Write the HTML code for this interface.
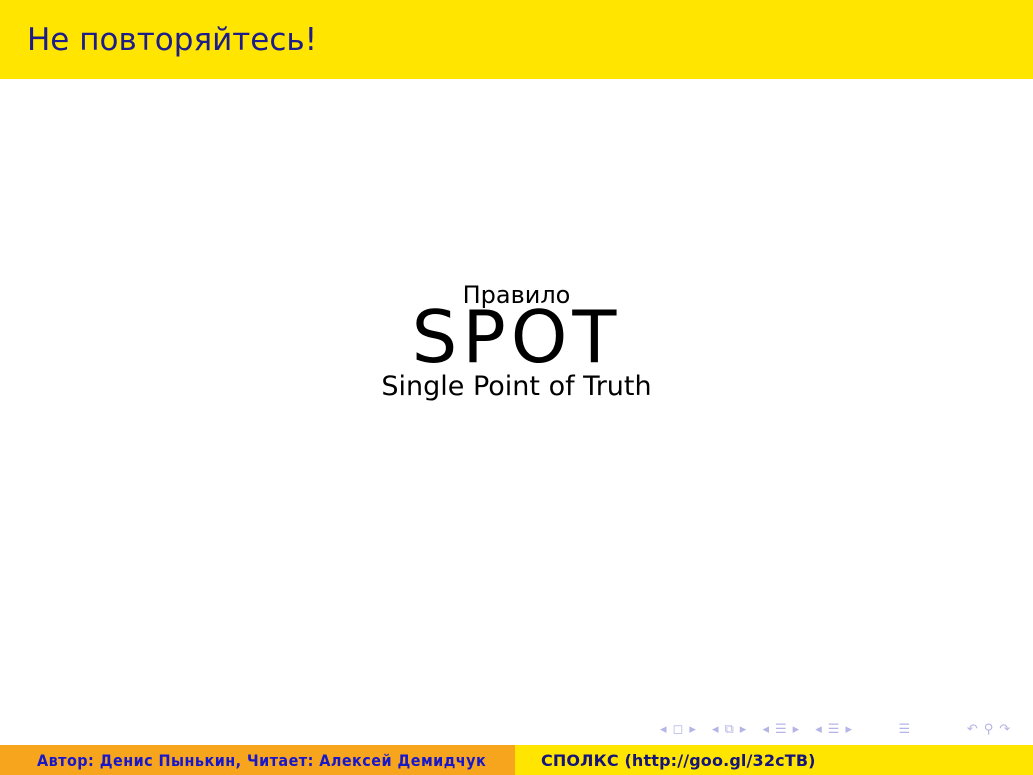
<!DOCTYPE html>
<html><head><meta charset="utf-8"><style>
body{margin:0;width:1033px;height:775px;position:relative;background:#fff;font-family:"DejaVu Sans","Liberation Sans",sans-serif;overflow:hidden}
.hdr{position:absolute;left:0;top:0;width:1033px;height:79px;background:#FFE500}
.t{position:absolute;left:27px;top:22px;font-size:31px;color:#1c1c8a;white-space:nowrap;letter-spacing:0px}
.c{position:absolute;left:0;width:1033px;text-align:center;color:#000;white-space:nowrap}
.f1{position:absolute;left:0;top:745px;width:515px;height:30px;background:#F8A51E}
.f2{position:absolute;left:515px;top:745px;width:518px;height:30px;background:#FFE500}
.ft{position:absolute;top:751px;font-size:16px;font-weight:bold;white-space:nowrap;font-family:"DejaVu Sans Condensed","DejaVu Sans",sans-serif}
.nav{position:absolute;top:722px;font-size:13px;color:#b4b4e6;white-space:nowrap;letter-spacing:6px}
</style></head><body>
<div class="hdr"><div class="t">Не повторяйтесь!</div></div>
<div class="c" style="top:281px;font-size:24px;">Правило</div>
<div class="c" style="top:297px;font-size:72px;letter-spacing:5px;line-height:80px">SPOT</div>
<div class="c" style="top:371px;font-size:27px;">Single Point of Truth</div>
<div class="nav" style="left:660px">◂◻▸ ◂⧉▸ ◂☰▸ ◂☰▸ &nbsp;&nbsp; ☰ &nbsp;&nbsp;&nbsp; ↶⚲↷</div>
<div class="f1"></div><div class="f2"></div>
<div class="ft" style="left:37px;color:#1818c8;letter-spacing:0.45px">Автор: Денис Пынькин, Читает: Алексей Демидчук</div>
<div class="ft" style="left:541px;color:#14147a;font-family:'DejaVu Sans',sans-serif;letter-spacing:0.15px">СПОЛКС (http://goo.gl/32cTB)</div>
</body></html>
